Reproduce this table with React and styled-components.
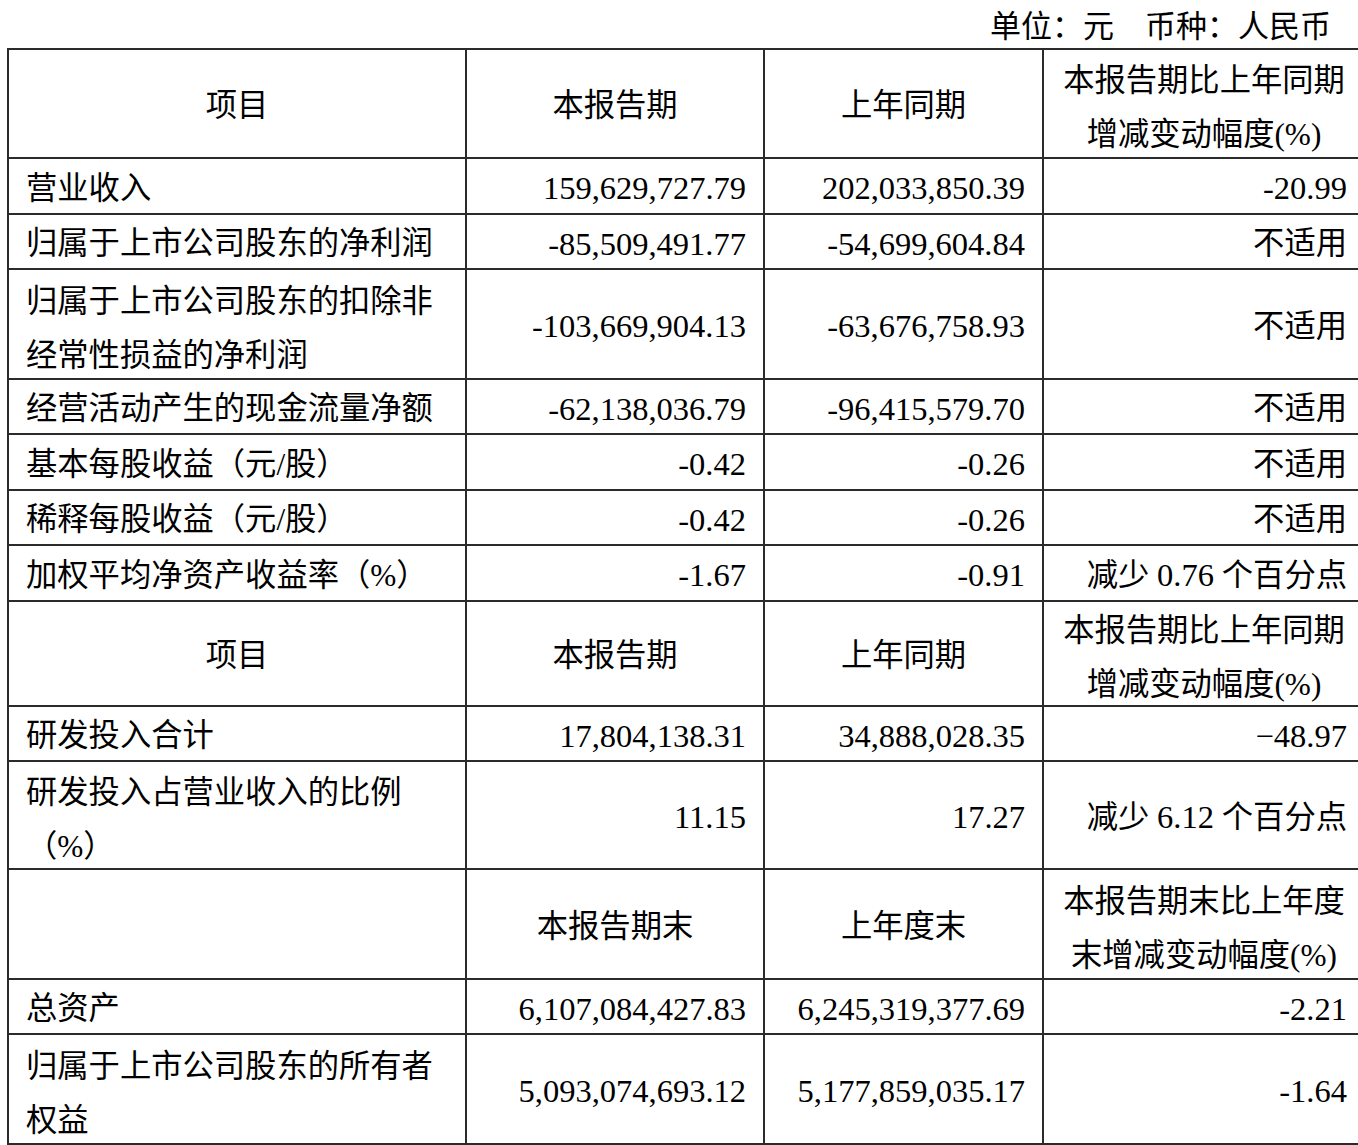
import React from "react";
import styled, { createGlobalStyle } from "styled-components";

const Global = createGlobalStyle`
  html, body { margin: 0; padding: 0; background: #fff; overflow: hidden; }
  body { font-family: "Liberation Serif", "Noto Sans CJK SC", serif; color: #000; }
`;

const Page = styled.div`
  width: 1358px;
  padding-left: 7px;
  box-sizing: border-box;
`;

const Caption = styled.div`
  height: 48px;
  width: 1324px;
  display: flex;
  align-items: center;
  justify-content: flex-end;
  font-size: 31px;
  padding-bottom: 2px;
  box-sizing: border-box;
  white-space: pre;
`;

const Table = styled.table`
  border-collapse: collapse;
  table-layout: fixed;
  width: 1357px;
  font-size: 31.3px;
`;

const Row = styled.tr`
  height: ${(p) => p.$h}px;
`;

const Cell = styled.td`
  border: 2px solid #2b2b2b;
  padding: 5px 17px 0 17px;
  text-align: ${(p) => p.$align || "left"};
  vertical-align: middle;
  line-height: 40px;
  white-space: nowrap;
  overflow: hidden;
  box-sizing: border-box;
`;

const Num = styled.span`
  font-size: 32.5px;
`;

const Stack = styled.div`
  display: flex;
  flex-direction: column;
  line-height: 54px;
  margin: -4px 0 -8px;
`;

const Col = styled.col`
  width: ${(p) => p.$w}px;
`;

const lines = (t) => t.split("\n").map((s, i) => <span key={i}>{s}</span>);

const fmt = (v) => {
  const m = v.match(/^(减少 )([\d.]+)( 个百分点)$/);
  if (m) return (<>{m[1]}<Num>{m[2]}</Num>{m[3]}</>);
  if (/^[-−\d.,]+$/.test(v)) return <Num>{v}</Num>;
  return v;
};

const Header = ({ a, b, c, d, h }) => (
  <Row $h={h}>
    <Cell $align="center">{a}</Cell>
    <Cell $align="center">{b}</Cell>
    <Cell $align="center">{c}</Cell>
    <Cell $align="center">
      <Stack>{lines(d)}</Stack>
    </Cell>
  </Row>
);

const DataRow = ({ label, v1, v2, v3, h = 55 }) => (
  <Row $h={h}>
    <Cell>{label.includes("\n") ? <Stack>{lines(label)}</Stack> : label}</Cell>
    <Cell $align="right">{fmt(v1)}</Cell>
    <Cell $align="right">{fmt(v2)}</Cell>
    <Cell $align="right">{fmt(v3)}</Cell>
  </Row>
);

export default function App() {
  return (
    <Page>
      <Global />
      <Caption>{"单位：元　币种：人民币"}</Caption>
      <Table>
        <colgroup>
          <Col $w={458} />
          <Col $w={298} />
          <Col $w={279} />
          <Col $w={322} />
        </colgroup>
        <tbody>
          <Header h={109} a="项目" b="本报告期" c="上年同期" d={"本报告期比上年同期\n增减变动幅度(%)"} />
          <DataRow h={56} label="营业收入" v1="159,629,727.79" v2="202,033,850.39" v3="-20.99" />
          <DataRow label="归属于上市公司股东的净利润" v1="-85,509,491.77" v2="-54,699,604.84" v3="不适用" />
          <DataRow h={110} label={"归属于上市公司股东的扣除非\n经常性损益的净利润"} v1="-103,669,904.13" v2="-63,676,758.93" v3="不适用" />
          <DataRow label="经营活动产生的现金流量净额" v1="-62,138,036.79" v2="-96,415,579.70" v3="不适用" />
          <DataRow h={56} label="基本每股收益（元/股）" v1="-0.42" v2="-0.26" v3="不适用" />
          <DataRow label="稀释每股收益（元/股）" v1="-0.42" v2="-0.26" v3="不适用" />
          <DataRow h={56} label="加权平均净资产收益率（%）" v1="-1.67" v2="-0.91" v3="减少 0.76 个百分点" />
          <Header h={105} a="项目" b="本报告期" c="上年同期" d={"本报告期比上年同期\n增减变动幅度(%)"} />
          <DataRow label="研发投入合计" v1="17,804,138.31" v2="34,888,028.35" v3="−48.97" />
          <DataRow h={108} label={"研发投入占营业收入的比例\n（%）"} v1="11.15" v2="17.27" v3="减少 6.12 个百分点" />
          <Header h={110} a="" b="本报告期末" c="上年度末" d={"本报告期末比上年度\n末增减变动幅度(%)"} />
          <DataRow label="总资产" v1="6,107,084,427.83" v2="6,245,319,377.69" v3="-2.21" />
          <DataRow h={110} label={"归属于上市公司股东的所有者\n权益"} v1="5,093,074,693.12" v2="5,177,859,035.17" v3="-1.64" />
        </tbody>
      </Table>
    </Page>
  );
}
